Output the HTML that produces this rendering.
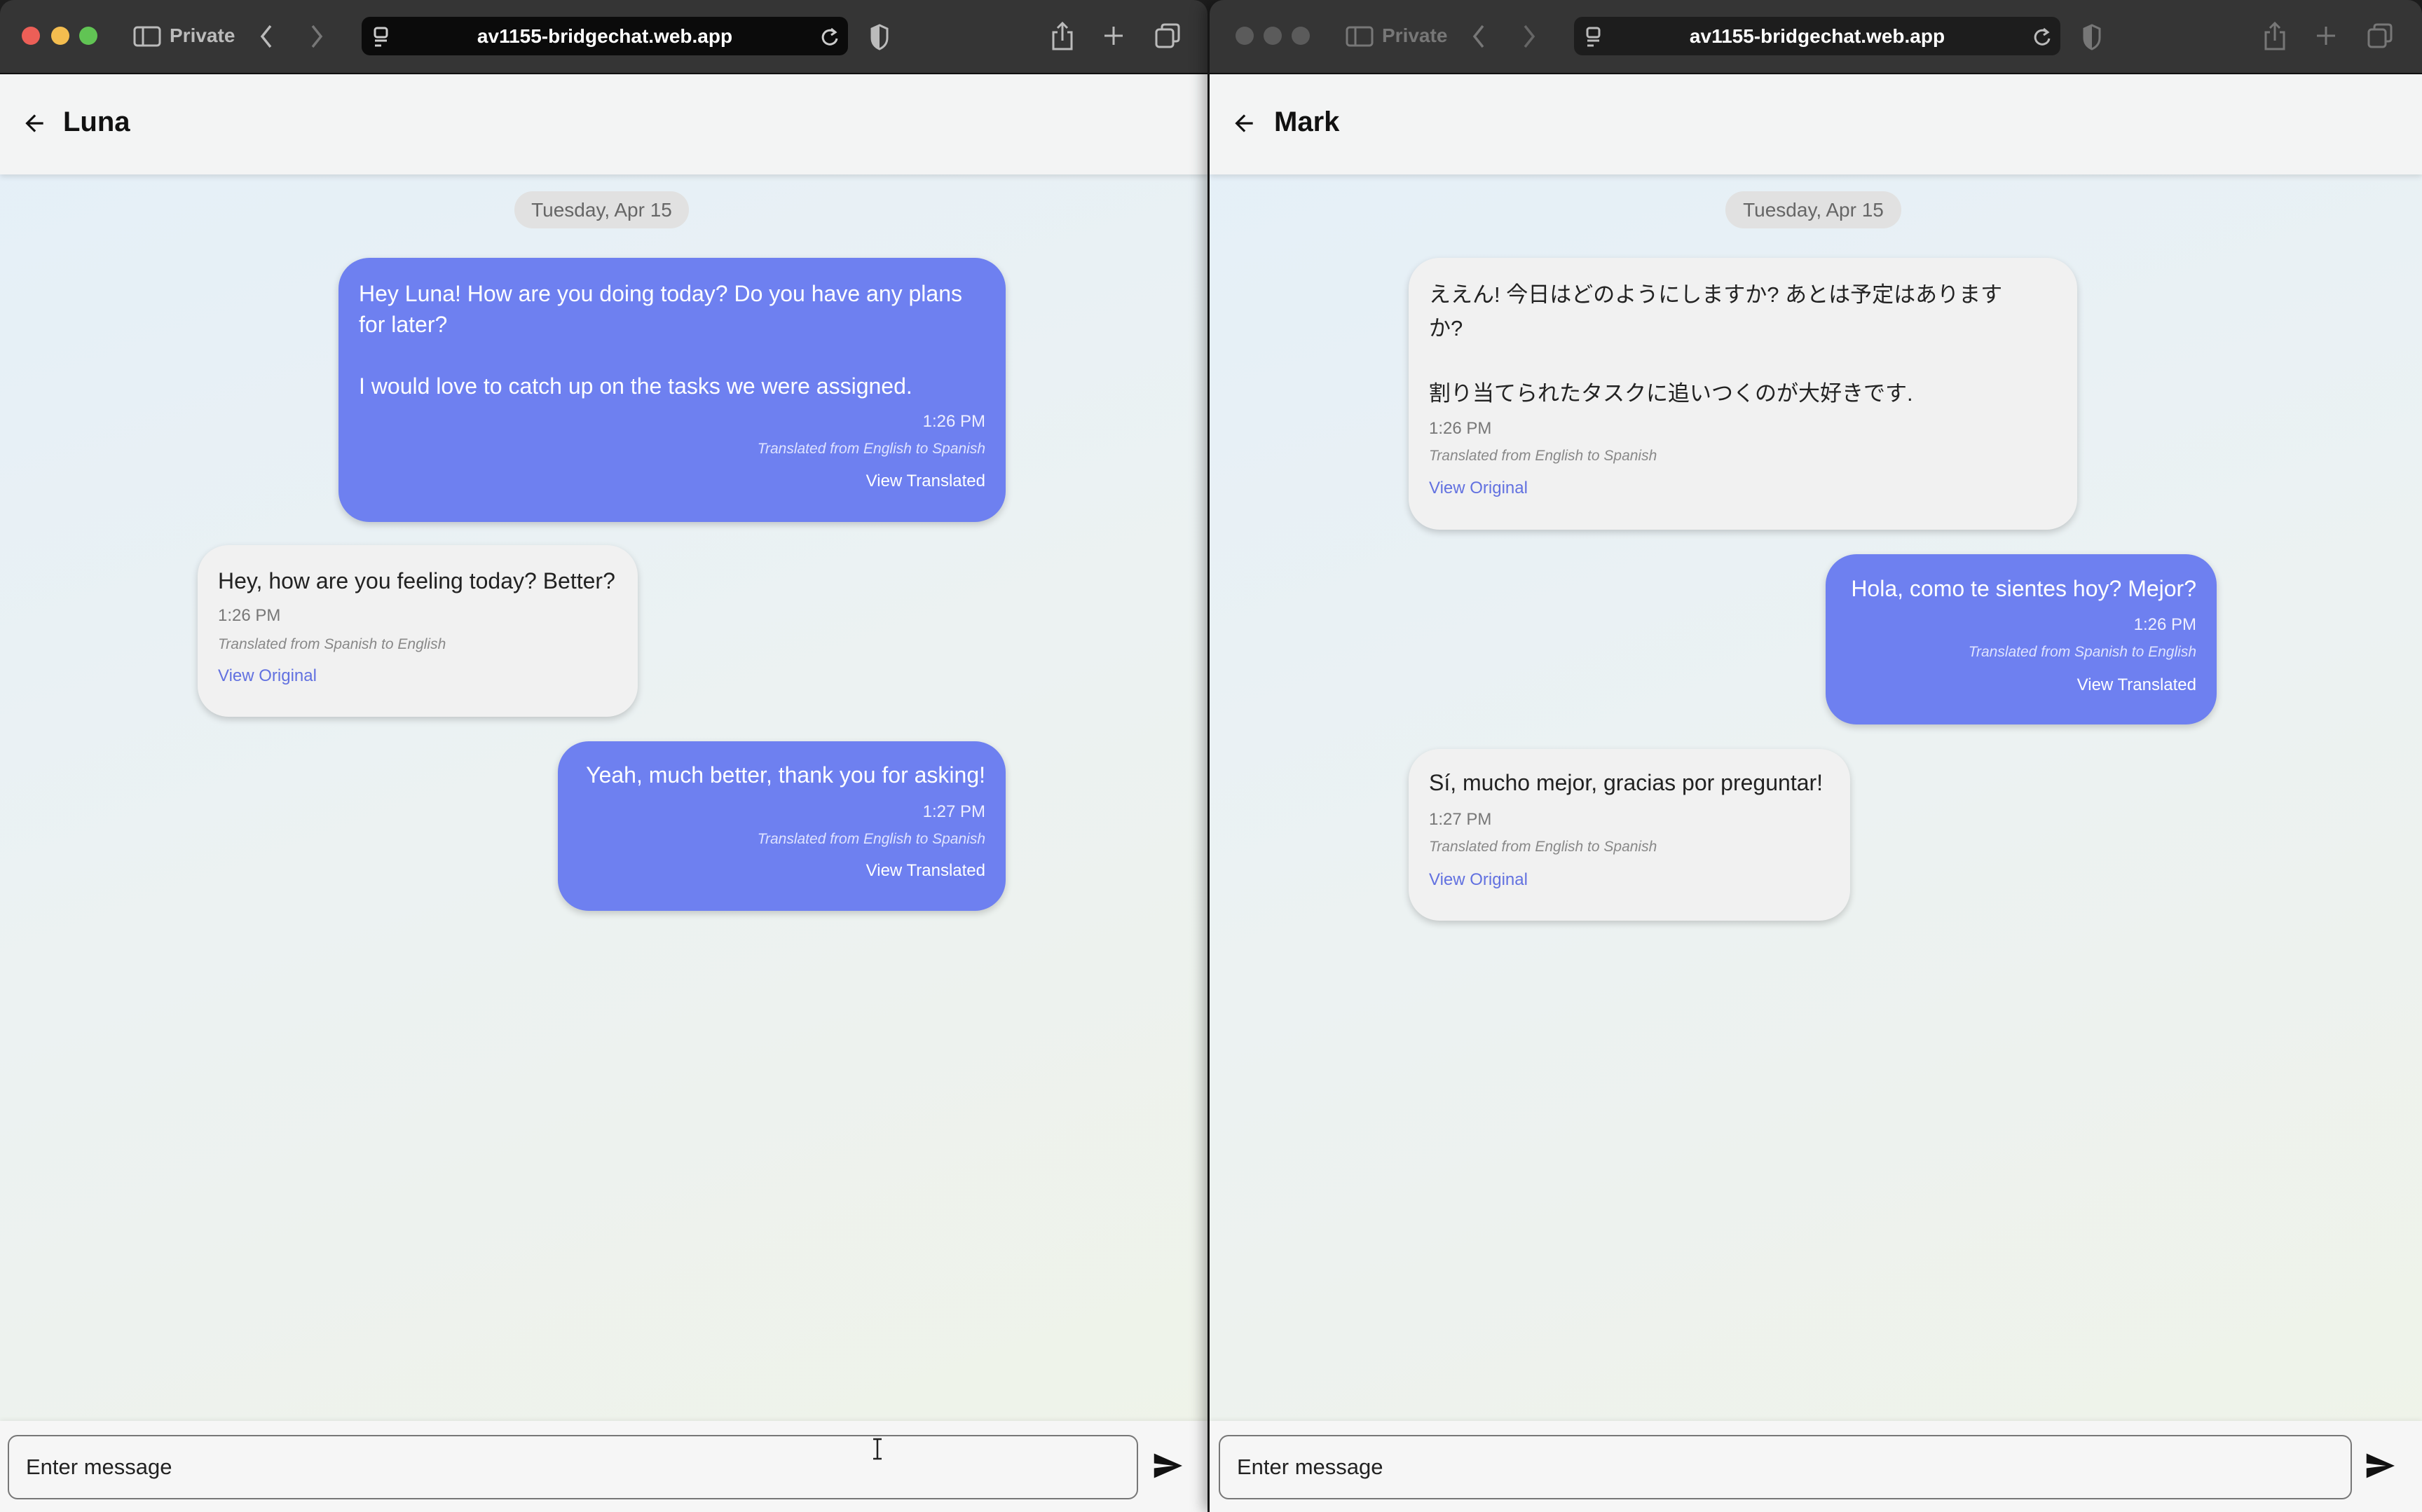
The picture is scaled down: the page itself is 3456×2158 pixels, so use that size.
<!DOCTYPE html>
<html><head><meta charset="utf-8"><style>
*{margin:0;padding:0;box-sizing:border-box}
body{width:3456px;height:2158px;background:#1e1e1e;position:relative;overflow:hidden;font-family:"Liberation Sans","Noto Sans CJK JP",sans-serif}
.win{position:absolute;top:0;height:2158px;overflow:hidden;border-radius:20px 20px 0 0}
.tb{position:absolute;left:0;top:0;right:0;height:106px;background:#353535;border-bottom:2px solid #111}
.page{position:absolute;left:0;right:0;top:106px;bottom:0;background:linear-gradient(160deg,#e4eff8 0%,#ecf2f2 50%,#eff3e8 100%)}
.hdr{position:absolute;left:0;right:0;top:0;height:143px;background:#f3f4f4;box-shadow:0 3px 8px rgba(0,0,0,.12)}
.foot{position:absolute;left:0;right:0;bottom:0;height:130px;background:#f6f6f6;box-shadow:0 -2px 6px rgba(0,0,0,.06)}
.t{position:absolute;white-space:nowrap}
.b{position:absolute;border-radius:44px;box-shadow:0 4px 10px rgba(0,0,0,.18)}
.out{background:#6e80f0;color:#fff}
.in{background:#f1f1f1;color:#222}
.chip{position:absolute;background:#e1e1e1;border-radius:26px;color:#666;font-size:28px;text-align:center;line-height:53px}
.dot{position:absolute;top:38px;width:26px;height:26px;border-radius:50%}
.url{position:absolute;top:24px;height:55px;background:#0b0b0b;border-radius:12px;color:#fff;font-size:28px;text-align:center;line-height:55px;font-weight:bold}
.gr{color:#bbb}
.tr{font-size:21px;line-height:24px;font-style:italic}
.inp{position:absolute;left:11px;top:2048px;height:92px;border:2px solid #777;border-radius:14px;background:#f6f6f6;font-size:31px;color:#222;padding-left:24px;line-height:88px}
</style></head><body>

<!-- LEFT WINDOW -->
<div class="win" style="left:0;width:1723px">
 <div class="tb">
  <div class="dot" style="left:31px;background:#ec5f57"></div>
  <div class="dot" style="left:73px;background:#f4bd4f"></div>
  <div class="dot" style="left:113px;background:#61c454"></div>
  <svg style="position:absolute;left:190px;top:37px" width="40" height="30" viewBox="0 0 40 30"><rect x="2" y="2" width="36" height="26" rx="4" fill="none" stroke="#bbb" stroke-width="3"/><line x1="14" y1="2" x2="14" y2="28" stroke="#bbb" stroke-width="3"/></svg>
  <div class="t gr" style="left:242px;top:34px;font-size:28px;font-weight:bold;line-height:34px">Private</div>
  <svg style="position:absolute;left:368px;top:34px" width="24" height="36"><path d="M18 3 L6 18 L18 33" fill="none" stroke="#bbb" stroke-width="3.5"/></svg>
  <svg style="position:absolute;left:440px;top:34px" width="24" height="36"><path d="M6 3 L18 18 L6 33" fill="none" stroke="#777" stroke-width="3.5"/></svg>
  <div class="url" style="left:516px;width:694px">av1155-bridgechat.web.app</div>
  <svg style="position:absolute;left:532px;top:38px" width="24" height="30"><rect x="3" y="2" width="17" height="13" rx="3" fill="none" stroke="#ccc" stroke-width="3"/><line x1="3" y1="20" x2="20" y2="20" stroke="#ccc" stroke-width="3"/><line x1="3" y1="27" x2="12" y2="27" stroke="#ccc" stroke-width="3"/></svg>
  <svg style="position:absolute;left:1172px;top:38px" width="26" height="30"><path d="M19 8 A10 10 0 1 0 22 17" fill="none" stroke="#ccc" stroke-width="3"/><path d="M14 3 L20 8 L14 12" fill="none" stroke="#ccc" stroke-width="3"/></svg>
  <svg style="position:absolute;left:1242px;top:34px" width="26" height="38"><path d="M13 2 L24 7 L24 20 Q24 31 13 36 Q2 31 2 20 L2 7 Z" fill="none" stroke="#bbb" stroke-width="3"/><path d="M13 2 L2 7 L2 20 Q2 31 13 36 Z" fill="#bbb"/></svg>
  <svg style="position:absolute;left:1500px;top:30px" width="32" height="42"><path d="M9 16 L3 16 L3 40 L29 40 L29 16 L23 16" fill="none" stroke="#bbb" stroke-width="3"/><path d="M16 28 L16 3 M9 10 L16 3 L23 10" fill="none" stroke="#bbb" stroke-width="3"/></svg>
  <svg style="position:absolute;left:1574px;top:36px" width="30" height="30"><path d="M15 2 V28 M2 15 H28" stroke="#bbb" stroke-width="3"/></svg>
  <svg style="position:absolute;left:1648px;top:33px" width="36" height="36"><rect x="2" y="9" width="24" height="25" rx="4" fill="none" stroke="#bbb" stroke-width="3"/><path d="M10 9 V6 Q10 2 14 2 L30 2 Q34 2 34 6 L34 22 Q34 26 30 26 H26" fill="none" stroke="#bbb" stroke-width="3"/></svg>
 </div>
 <div class="page">
  <div class="hdr">
   <svg style="position:absolute;left:30px;top:51px" width="38" height="38" viewBox="0 0 24 24"><path d="M20 11H7.83l5.59-5.59L12 4l-8 8 8 8 1.41-1.41L7.83 13H20v-2z" fill="#111"/></svg>
   <div class="t" style="left:90px;top:44px;font-size:40px;line-height:48px;color:#111;font-weight:bold">Luna</div>
  </div>
  <div class="chip" style="left:734px;top:167px;width:249px">Tuesday, Apr 15</div>

  <div class="b out" style="left:483px;top:262px;width:952px;height:377px">
   <div class="t" style="left:29px;top:29px;font-size:32px;line-height:44px">Hey Luna! How are you doing today? Do you have any plans<br>for later?<br><br>I would love to catch up on the tasks we were assigned.</div>
   <div class="t" style="right:29px;top:220px;font-size:24px;line-height:28px;color:#eef">1:26 PM</div>
   <div class="t tr" style="right:29px;top:261px;color:#dfe3ff">Translated from English to Spanish</div>
   <div class="t" style="right:29px;top:305px;font-size:24px;line-height:28px">View Translated</div>
  </div>

  <div class="b in" style="left:282px;top:672px;width:628px;height:245px">
   <div class="t" style="left:29px;top:29px;font-size:32px;line-height:44px">Hey, how are you feeling today? Better?</div>
   <div class="t" style="left:29px;top:87px;font-size:24px;line-height:28px;color:#777">1:26 PM</div>
   <div class="t tr" style="left:29px;top:130px;color:#888">Translated from Spanish to English</div>
   <div class="t" style="left:29px;top:173px;font-size:24px;line-height:28px;color:#6271e0">View Original</div>
  </div>

  <div class="b out" style="left:796px;top:952px;width:639px;height:242px">
   <div class="t" style="right:29px;top:26px;font-size:32px;line-height:44px">Yeah, much better, thank you for asking!</div>
   <div class="t" style="right:29px;top:87px;font-size:24px;line-height:28px;color:#eef">1:27 PM</div>
   <div class="t tr" style="right:29px;top:128px;color:#dfe3ff">Translated from English to Spanish</div>
   <div class="t" style="right:29px;top:171px;font-size:24px;line-height:28px">View Translated</div>
  </div>
  <div class="foot"></div>
 </div>
 <div class="inp" style="width:1613px">Enter message</div>
 <svg style="position:absolute;left:1645px;top:2074px" width="42" height="36" viewBox="0 0 24 20"><path d="M1 20 L24 10 L1 0 L1 8 L17 10 L1 12 Z" fill="#111"/></svg>
 <svg style="position:absolute;left:1242px;top:2052px" width="20" height="32"><path d="M4 2 H16 M10 2 V30 M4 30 H16" stroke="#222" stroke-width="2.5" fill="none"/></svg>
</div>

<!-- RIGHT WINDOW -->
<div class="win" style="left:1726px;width:1730px;box-shadow:-8px 0 20px rgba(0,0,0,.35)">
 <div class="tb">
  <div class="dot" style="left:37px;background:#5b5b5b"></div>
  <div class="dot" style="left:77px;background:#5b5b5b"></div>
  <div class="dot" style="left:117px;background:#5b5b5b"></div>
  <svg style="position:absolute;left:194px;top:37px" width="40" height="30" viewBox="0 0 40 30"><rect x="2" y="2" width="36" height="26" rx="4" fill="none" stroke="#777" stroke-width="3"/><line x1="14" y1="2" x2="14" y2="28" stroke="#777" stroke-width="3"/></svg>
  <div class="t" style="left:246px;top:34px;font-size:28px;font-weight:bold;line-height:34px;color:#777">Private</div>
  <svg style="position:absolute;left:372px;top:34px" width="24" height="36"><path d="M18 3 L6 18 L18 33" fill="none" stroke="#777" stroke-width="3.5"/></svg>
  <svg style="position:absolute;left:444px;top:34px" width="24" height="36"><path d="M6 3 L18 18 L6 33" fill="none" stroke="#666" stroke-width="3.5"/></svg>
  <div class="url" style="left:520px;width:694px;background:#1d1d1d">av1155-bridgechat.web.app</div>
  <svg style="position:absolute;left:536px;top:38px" width="24" height="30"><rect x="3" y="2" width="17" height="13" rx="3" fill="none" stroke="#bbb" stroke-width="3"/><line x1="3" y1="20" x2="20" y2="20" stroke="#bbb" stroke-width="3"/><line x1="3" y1="27" x2="12" y2="27" stroke="#bbb" stroke-width="3"/></svg>
  <svg style="position:absolute;left:1176px;top:38px" width="26" height="30"><path d="M19 8 A10 10 0 1 0 22 17" fill="none" stroke="#bbb" stroke-width="3"/><path d="M14 3 L20 8 L14 12" fill="none" stroke="#bbb" stroke-width="3"/></svg>
  <svg style="position:absolute;left:1246px;top:34px" width="26" height="38"><path d="M13 2 L24 7 L24 20 Q24 31 13 36 Q2 31 2 20 L2 7 Z" fill="none" stroke="#777" stroke-width="3"/><path d="M13 2 L2 7 L2 20 Q2 31 13 36 Z" fill="#777"/></svg>
  <svg style="position:absolute;left:1504px;top:30px" width="32" height="42"><path d="M9 16 L3 16 L3 40 L29 40 L29 16 L23 16" fill="none" stroke="#777" stroke-width="3"/><path d="M16 28 L16 3 M9 10 L16 3 L23 10" fill="none" stroke="#777" stroke-width="3"/></svg>
  <svg style="position:absolute;left:1578px;top:36px" width="30" height="30"><path d="M15 2 V28 M2 15 H28" stroke="#777" stroke-width="3"/></svg>
  <svg style="position:absolute;left:1652px;top:33px" width="36" height="36"><rect x="2" y="9" width="24" height="25" rx="4" fill="none" stroke="#777" stroke-width="3"/><path d="M10 9 V6 Q10 2 14 2 L30 2 Q34 2 34 6 L34 22 Q34 26 30 26 H26" fill="none" stroke="#777" stroke-width="3"/></svg>
 </div>
 <div class="page">
  <div class="hdr">
   <svg style="position:absolute;left:30px;top:51px" width="38" height="38" viewBox="0 0 24 24"><path d="M20 11H7.83l5.59-5.59L12 4l-8 8 8 8 1.41-1.41L7.83 13H20v-2z" fill="#111"/></svg>
   <div class="t" style="left:92px;top:44px;font-size:40px;line-height:48px;color:#111;font-weight:bold">Mark</div>
  </div>
  <div class="chip" style="left:736px;top:167px;width:251px">Tuesday, Apr 15</div>

  <div class="b in" style="left:284px;top:262px;width:954px;height:388px">
   <div class="t" style="left:29px;top:29px;font-size:31px;line-height:48px">ええん! 今日はどのようにしますか? あとは予定はあります<br>か?</div>
   <div class="t" style="left:29px;top:170px;font-size:31px;line-height:48px">割り当てられたタスクに追いつくのが大好きです.</div>
   <div class="t" style="left:29px;top:230px;font-size:24px;line-height:28px;color:#777">1:26 PM</div>
   <div class="t tr" style="left:29px;top:271px;color:#888">Translated from English to Spanish</div>
   <div class="t" style="left:29px;top:315px;font-size:24px;line-height:28px;color:#6271e0">View Original</div>
  </div>

  <div class="b out" style="left:879px;top:685px;width:558px;height:243px">
   <div class="t" style="right:29px;top:27px;font-size:32px;line-height:44px">Hola, como te sientes hoy? Mejor?</div>
   <div class="t" style="right:29px;top:87px;font-size:24px;line-height:28px;color:#eef">1:26 PM</div>
   <div class="t tr" style="right:29px;top:128px;color:#dfe3ff">Translated from Spanish to English</div>
   <div class="t" style="right:29px;top:173px;font-size:24px;line-height:28px">View Translated</div>
  </div>

  <div class="b in" style="left:284px;top:963px;width:630px;height:245px">
   <div class="t" style="left:29px;top:26px;font-size:32px;line-height:44px">Sí, mucho mejor, gracias por preguntar!</div>
   <div class="t" style="left:29px;top:87px;font-size:24px;line-height:28px;color:#777">1:27 PM</div>
   <div class="t tr" style="left:29px;top:128px;color:#888">Translated from English to Spanish</div>
   <div class="t" style="left:29px;top:173px;font-size:24px;line-height:28px;color:#6271e0">View Original</div>
  </div>
  <div class="foot"></div>
 </div>
 <div class="inp" style="left:13px;width:1617px">Enter message</div>
 <svg style="position:absolute;left:1649px;top:2074px" width="42" height="36" viewBox="0 0 24 20"><path d="M1 20 L24 10 L1 0 L1 8 L17 10 L1 12 Z" fill="#111"/></svg>
</div>
</body></html>
